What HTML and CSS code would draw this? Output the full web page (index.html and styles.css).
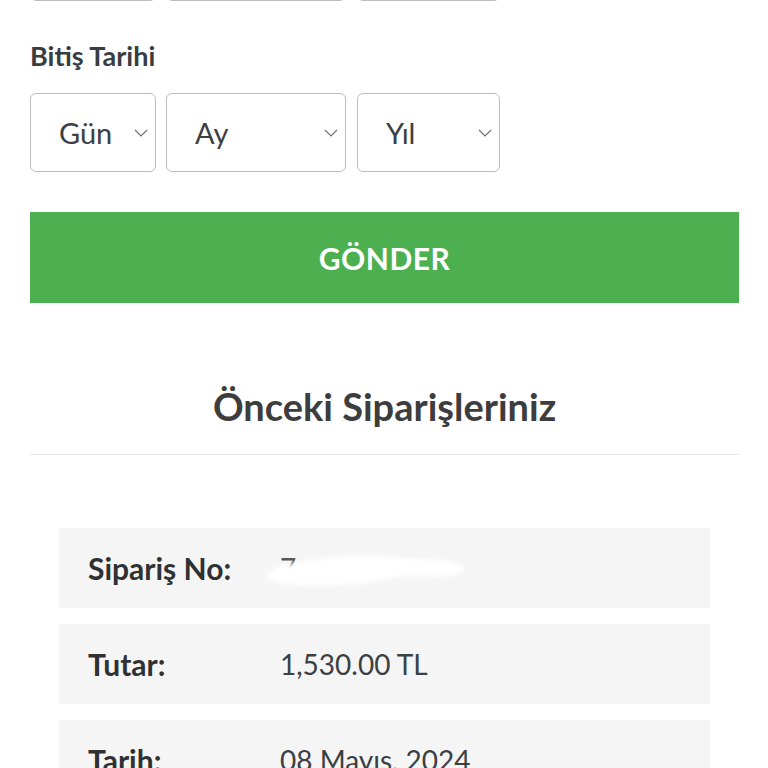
FILE: index.html
```html
<!DOCTYPE html>
<html lang="tr">
<head>
    <meta charset="utf-8">
    <title>Siparişlerim</title>
    <meta name="viewport" content="width=device-width, initial-scale=1.0">
    <link rel="stylesheet" href="styles.css">
</head>

<body>

    <div class="page">

        <div class="date-group date-group-start">
            <div class="date-label">Başlangıç Tarihi</div>
            <div class="date-row">
                <div class="select select-day"><span>Gün</span><svg viewBox="0 0 14 8"><path d="M1 1l6 6 6-6"/></svg></div>
                <div class="select select-month"><span>Ay</span><svg viewBox="0 0 14 8"><path d="M1 1l6 6 6-6"/></svg></div>
                <div class="select select-year"><span>Yıl</span><svg viewBox="0 0 14 8"><path d="M1 1l6 6 6-6"/></svg></div>
            </div>
        </div>

        <div class="date-group">
            <div class="date-label">Bitiş Tarihi</div>
            <div class="date-row">
                <div class="select select-day"><span>Gün</span><svg viewBox="0 0 14 8"><path d="M1 1l6 6 6-6"/></svg></div>
                <div class="select select-month"><span>Ay</span><svg viewBox="0 0 14 8"><path d="M1 1l6 6 6-6"/></svg></div>
                <div class="select select-year"><span>Yıl</span><svg viewBox="0 0 14 8"><path d="M1 1l6 6 6-6"/></svg></div>
            </div>
        </div>

        <button class="submit-button">GÖNDER</button>

        <h2 class="orders-title">Önceki Siparişleriniz</h2>

        <div class="orders">
            <div class="order-row">
                <div class="order-key">Sipariş No:</div>
                <div class="order-value order-hidden">7<span class="smudge"></span><span class="smudge smudge-tail"></span></div>
            </div>
            <div class="order-row">
                <div class="order-key">Tutar:</div>
                <div class="order-value">1,530.00 TL</div>
            </div>
            <div class="order-row">
                <div class="order-key">Tarih:</div>
                <div class="order-value">08 Mayıs, 2024</div>
            </div>
        </div>

    </div>

</body>
</html>
```

FILE: styles.css
```css
body {
    margin: 0;
    padding: 0;
    background-color: #fff;
    font-family: "Lato", "Noto Sans", sans-serif;
    color: #3c4043;
    overflow: hidden;
}

.page {
    padding: 0 29px 0 30px;
    margin-top: -133px;
}

.date-group {
    margin-bottom: 40px;
}

.date-group-start {
    margin-bottom: 40px;
}

.date-group-start .date-label {
    margin-bottom: 25px;
}

.date-label {
    font-size: 27px;
    font-weight: 700;
    color: #3a3d40;
    line-height: 30px;
    margin-bottom: 22px;
}

.date-row {
    display: flex;
    gap: 10px;
}

.select {
    box-sizing: border-box;
    height: 79px;
    border: 1.5px solid #bdbdbd;
    border-radius: 6px;
    display: flex;
    align-items: center;
    justify-content: space-between;
    padding: 0 7px 0 28px;
    font-size: 29px;
    color: #3c4043;
}

.select svg {
    width: 14px;
    height: 8px;
    fill: none;
    stroke: #6b6f73;
    stroke-width: 1.1;
}

.select-day {
    width: 126px;
}

.select-month {
    width: 180px;
}

.select-year {
    width: 143px;
    margin-left: 1px;
}

.submit-button {
    display: block;
    width: 100%;
    height: 91px;
    border: none;
    border-radius: 0;
    background-color: #4caf50;
    color: #fff;
    font-family: inherit;
    font-size: 30px;
    font-weight: 700;
    letter-spacing: 0.5px;
    cursor: pointer;
}

.orders-title {
    margin: 0;
    padding: 80px 0 25px;
    text-align: center;
    font-size: 38px;
    font-weight: 700;
    color: #3d3d3d;
    border-bottom: 1.5px solid #e8e8e8;
}

.orders {
    padding: 73px 29px 0;
    display: flex;
    flex-direction: column;
    gap: 16px;
}

.order-row {
    height: 80px;
    background-color: #f5f5f5;
    display: flex;
    align-items: center;
    padding: 0 29px;
    font-size: 28px;
}

.order-key {
    width: 192px;
    flex-shrink: 0;
    font-size: 30px;
    font-weight: 700;
    color: #2f3133;
}

.order-value {
    color: #3c4043;
}

.order-hidden {
    position: relative;
    color: #555;
}

.smudge {
    position: absolute;
    left: -14px;
    top: 6px;
    width: 150px;
    height: 28px;
    background-color: #fff;
    border-radius: 50%;
    transform: rotate(-4deg);
    filter: blur(2px);
}

.smudge-tail {
    left: 100px;
    top: 8px;
    width: 84px;
    height: 18px;
    transform: rotate(2deg);
}
```
